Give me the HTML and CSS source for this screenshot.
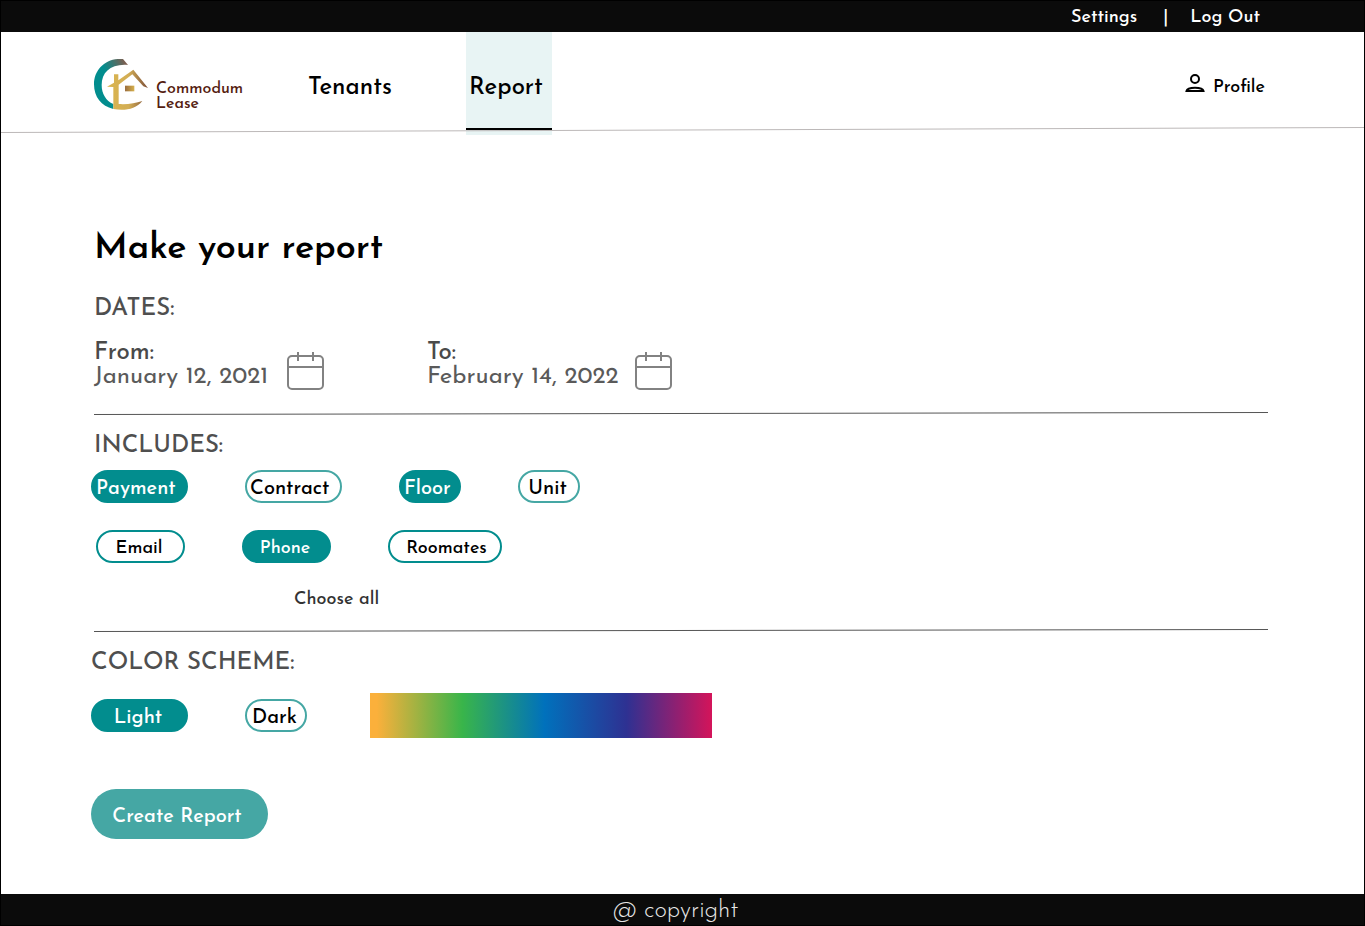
FILE: index.html
```html
<!DOCTYPE html>
<html lang="en">
<head>
<meta charset="utf-8">
<meta name="viewport" content="width=device-width, initial-scale=1">
<title>Commodum Lease - Report</title>
<link rel="stylesheet" href="styles.css">
</head>
<body>
<div class="page">
  <div class="topbar">
    <a href="#settings">Settings</a>
    <span class="topbar-sep">|</span>
    <a href="#logout">Log Out</a>
  </div>

  <header class="header">
    <a class="brand" href="#home">
      <svg class="brand-mark" viewBox="30 27 162 153" aria-hidden="true">
        <defs>
          <linearGradient id="arc" gradientUnits="userSpaceOnUse" x1="62" y1="60" x2="128" y2="30">
            <stop offset="0" stop-color="#028d8e"/>
            <stop offset="1" stop-color="#87594a"/>
          </linearGradient>
          <linearGradient id="gold" gradientUnits="userSpaceOnUse" x1="76" y1="0" x2="192" y2="0">
            <stop offset="0" stop-color="#d9b44f"/>
            <stop offset=".5" stop-color="#d3ae55"/>
            <stop offset="1" stop-color="#7d4f38"/>
          </linearGradient>
          <linearGradient id="pane" x1="0" y1="0" x2="1" y2="0">
            <stop offset="0" stop-color="#9a6d3e"/>
            <stop offset="1" stop-color="#d6b04c"/>
          </linearGradient>
        </defs>
        <path fill="url(#arc)" d="M117 27C66 23 30 58 30 103c0 38 22 66 58 74v-15c-22-9-35-31-35-57 0-38 27-64 79-60z"/>
        <path fill="url(#gold)" d="M90 73h13v18l45-32 44 55-14-5-33-36-41 31v58c27 2 50-3 71-9-20 25-53 30-87 24V111l-19-1 21-12z"/>
        <path fill="url(#pane)" d="M123 107h28v17h-28z"/>
      </svg>
      <span class="brand-name">Commodum<br>Lease</span>
    </a>
    <nav class="nav">
      <a class="nav-link" href="#tenants">Tenants</a>
      <a class="nav-link nav-link-active" href="#report" aria-current="page">Report</a>
    </nav>
    <a class="profile" href="#profile">
      <svg class="profile-icon" viewBox="0 0 20 20" aria-hidden="true">
        <circle cx="10" cy="5" r="4"/>
        <path d="M1.500 17c1-4.500 16-4.500 17 0z"/>
      </svg>
      <span class="profile-label">Profile</span>
    </a>
    <svg class="header-line" viewBox="0 0 1363 6" preserveAspectRatio="none" aria-hidden="true">
      <path d="M0 5.5L1363 .5"/>
    </svg>
  </header>

  <main class="main">
    <h1 class="title">Make your report</h1>

    <h2 class="section-title">DATES:</h2>
    <div class="dates">
      <div class="date date-from">
        <div class="date-text"><strong>From:</strong><span>January 12, 2021</span></div>
        <button class="calendar" type="button" aria-label="Choose start date">
          <svg viewBox="0 0 37 38" aria-hidden="true"><rect x="1" y="4" width="35" height="33" rx="4"/><path d="M1 15h35M11 0v9M26 0v9"/></svg>
        </button>
      </div>
      <div class="date date-to">
        <div class="date-text"><strong>To:</strong><span>February 14, 2022</span></div>
        <button class="calendar" type="button" aria-label="Choose end date">
          <svg viewBox="0 0 37 38" aria-hidden="true"><rect x="1" y="4" width="35" height="33" rx="4"/><path d="M1 15h35M11 0v9M26 0v9"/></svg>
        </button>
      </div>
    </div>
    <svg class="divider" viewBox="0 0 1174 3" preserveAspectRatio="none" aria-hidden="true"><path d="M0 2.5L1174 .5"/></svg>

    <h2 class="section-title">INCLUDES:</h2>
    <div class="pills pills-first">
      <button class="pill pill-on pill-wide pill-start" type="button" aria-pressed="true">Payment</button>
      <button class="pill pill-wide pill-start" type="button" aria-pressed="false">Contract</button>
      <button class="pill pill-on pill-start" type="button" aria-pressed="true">Floor</button>
      <button class="pill" type="button" aria-pressed="false">Unit</button>
    </div>
    <div class="pills pills-second">
      <button class="pill pill-medium" type="button" aria-pressed="false">Email</button>
      <button class="pill pill-on pill-medium" type="button" aria-pressed="true">Phone</button>
      <button class="pill pill-large" type="button" aria-pressed="false">Roomates</button>
    </div>
    <button class="choose-all" type="button">Choose all</button>
    <svg class="divider" viewBox="0 0 1174 3" preserveAspectRatio="none" aria-hidden="true"><path d="M0 2.5L1174 .5"/></svg>

    <h2 class="section-title section-title-flush">COLOR SCHEME:</h2>
    <div class="pills scheme">
      <button class="pill pill-on pill-wide" type="button" aria-pressed="true">Light</button>
      <button class="pill" type="button" aria-pressed="false">Dark</button>
      <button class="spectrum" type="button" aria-label="Pick a color"></button>
    </div>

    <button class="create" type="button">Create Report</button>
  </main>

  <footer class="footer">@ copyright</footer>
</div>
</body>
</html>
```

FILE: styles.css
```css
* {
  box-sizing: border-box;
}

body {
  margin: 0;
  background: #fff;
  color: #000;
  font-family: "Josefin Sans", Lato, "Open Sans", sans-serif;
  font-weight: 500;
}

a {
  color: inherit;
  text-decoration: none;
}

button {
  margin: 0;
  padding: 0;
  border: 0;
  background: none;
  color: inherit;
  font: inherit;
  cursor: pointer;
}

.page {
  display: flex;
  flex-direction: column;
  min-height: 100vh;
  border: 1px solid #000;
}

.topbar {
  display: flex;
  justify-content: flex-end;
  padding: 5px 104px 2px 24px;
  background: #0b0b0b;
  color: #fff;
  font-size: 18px;
  line-height: 24px;
}

.topbar-sep {
  margin: 0 22px 0 26px;
}

.header {
  position: relative;
  display: flex;
  align-items: stretch;
  min-height: 103px;
  padding: 0 99px 0 93px;
}

.brand {
  display: flex;
  align-items: flex-start;
  gap: 8px;
  width: 214px;
  padding-top: 27px;
}

.brand-mark {
  flex: none;
  width: 54px;
  height: 51px;
}

.brand-name {
  padding-top: 23px;
  color: #54200f;
  font-size: 16px;
  line-height: 15px;
}

.nav {
  display: flex;
  gap: 72px;
}

.nav-link {
  min-width: 86px;
  padding-top: 41px;
  font-size: 24px;
  line-height: 30px;
}

.nav-link-active {
  padding-left: 3px;
  background: linear-gradient(#000, #000) 0 96px / 100% 2px no-repeat #e8f4f4;
}

.profile {
  display: flex;
  align-items: flex-start;
  gap: 8px;
  margin-left: auto;
  padding-top: 42px;
  font-size: 18px;
  line-height: 24px;
}

.profile-label {
  padding-top: 2px;
}

.profile-icon {
  width: 20px;
  height: 20px;
  fill: none;
  stroke: #000;
  stroke-width: 2;
}

.header-line {
  position: absolute;
  left: 0;
  bottom: 2px;
  width: 100%;
  height: 6px;
  stroke: #bcb8b8;
}

.main {
  flex: 1;
  padding: 94px 96px 55px 90px;
}

.title {
  margin: 0 0 28px;
  padding-left: 3px;
  font-size: 36px;
  font-weight: 600;
  line-height: 40px;
}

.section-title {
  margin: 0;
  padding-left: 3px;
  color: #4f4f4f;
  font-size: 24px;
  font-weight: 500;
  line-height: 24px;
}

.section-title-flush {
  padding-left: 0;
}

.dates {
  display: flex;
  flex-wrap: wrap;
  gap: 16px 103px;
  margin-top: 20px;
  padding-left: 3px;
}

.date {
  display: flex;
  justify-content: space-between;
  align-items: flex-start;
  color: #5a5a5a;
  font-size: 24px;
  font-weight: 400;
  line-height: 24px;
}

.date-from {
  width: 230px;
}

.date-to {
  width: 245px;
}

.date-text strong {
  display: block;
  color: #4a4a4a;
  font-weight: 500;
}

.calendar {
  width: 37px;
  height: 38px;
  margin-top: 11px;
}

.calendar svg {
  display: block;
  fill: none;
  stroke: #828282;
  stroke-width: 2;
}

.divider {
  display: block;
  width: calc(100% - 3px);
  height: 3px;
  margin: 22px 0 19px 3px;
  stroke: #555;
}

.pills {
  display: flex;
  flex-wrap: wrap;
  align-items: center;
  gap: 16px 57px;
}

.pills-first {
  margin-top: 12px;
  font-size: 20px;
}

.pills-second {
  margin-top: 27px;
  padding-left: 5px;
  font-size: 18px;
}

.pill {
  width: 62px;
  height: 33px;
  padding: 4px 3px 0 0;
  border: 2px solid #45a7a4;
  border-radius: 17px;
  background: #fff;
  color: #000;
  text-align: center;
  white-space: nowrap;
}

.pills-second .pill {
  border-color: #028d8e;
}

.pills .pill-on {
  border-color: #028d8e;
  background: #028d8e;
  color: #fff;
}

.pill-medium {
  width: 89px;
}

.pill-wide {
  width: 97px;
}

.pill-large {
  width: 114px;
  padding: 4px 0 0 3px;
}

.pill-start {
  padding: 4px 0 0 3px;
  text-align: left;
}

.choose-all {
  display: block;
  margin: 25px 0 0 203px;
  color: #333;
  font-size: 18px;
  line-height: 24px;
}

.choose-all + .divider {
  margin-top: 17px;
}

.scheme {
  margin-top: 18px;
  font-size: 20px;
}

.spectrum {
  width: 342px;
  height: 45px;
  margin-left: 6px;
  background: linear-gradient(90deg, #fbb03b 0%, #fbb03b 2%, #39b54a 27%, #0071bc 51%, #2e3192 75%, #d4145a 100%);
}

.create {
  width: 177px;
  height: 50px;
  margin-top: 51px;
  padding: 5px 5px 0 0;
  border-radius: 25px;
  background: #45a7a4;
  color: #fff;
  font-size: 20px;
}

.footer {
  padding: 5px 14px 2px 0;
  background: #0b0b0b;
  color: #e8e8e8;
  font-size: 24px;
  font-weight: 300;
  line-height: 24px;
  text-align: center;
}
```
